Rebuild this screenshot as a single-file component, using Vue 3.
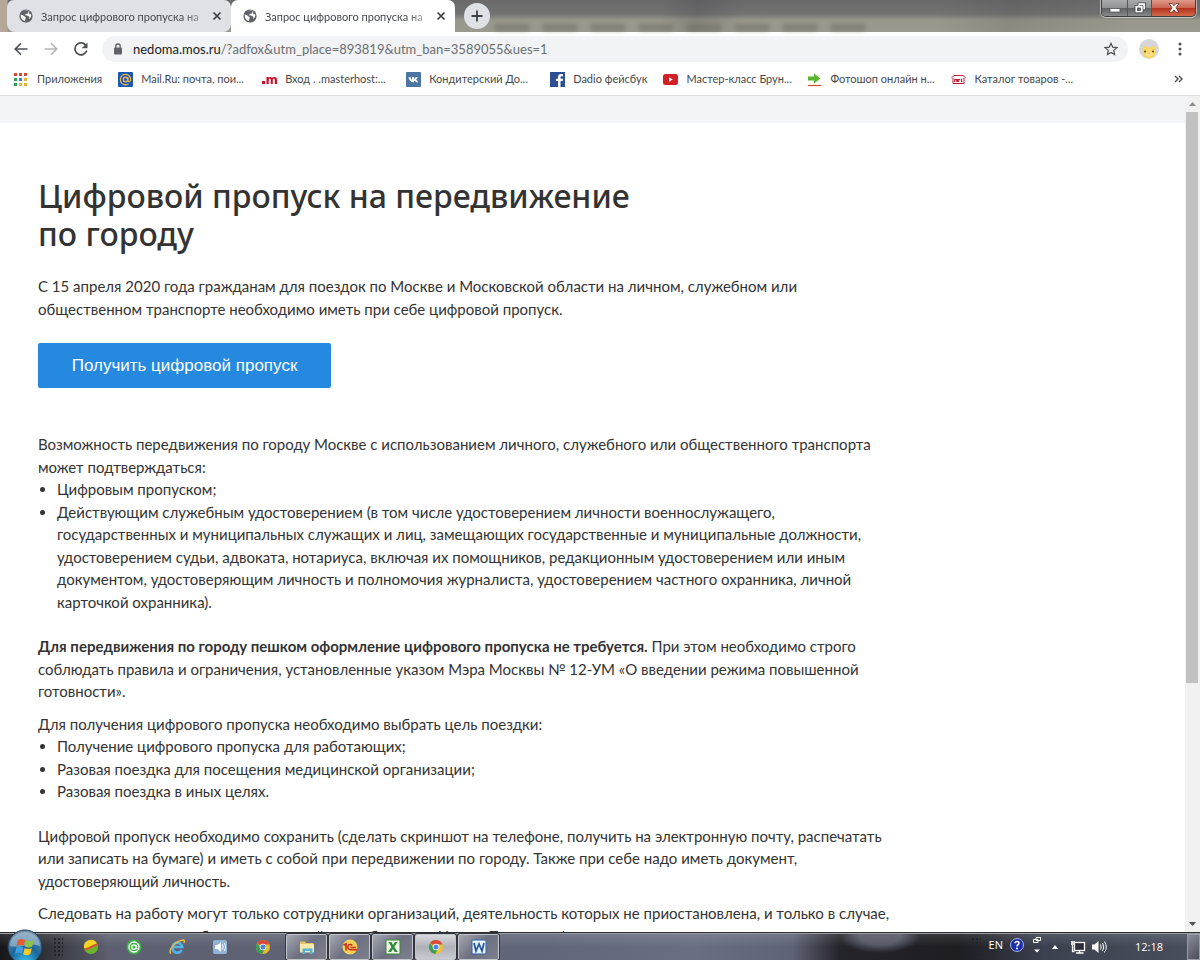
<script setup>
import { ref } from 'vue'

const tabs = [
  { id: 1, name: 'Запрос цифрового пропуска на' },
  { id: 2, name: 'Запрос цифрового пропуска на' },
]
const activeTab = ref(2)
const path = ref('/?adfox&utm_place=893819&utm_ban=3589055&ues=1')

const bookmarks = [
  { id: 'apps', name: 'Приложения' },
  { id: 'mail', name: 'Mail.Ru: почта, пои...', long: true },
  { id: 'host', name: 'Вход . .masterhost:...', long: true },
  { id: 'vk', name: 'Кондитерский До...', long: true },
  { id: 'fb', name: 'Dadio фейсбук' },
  { id: 'yt', name: 'Мастер-класс Брун...', long: true },
  { id: 'photo', name: 'Фотошоп онлайн н...', long: true },
  { id: 'cat', name: 'Каталог товаров -...', long: true },
]

const appDots = [
  '#d34836', '#d34836', '#d34836',
  '#2f9e57', '#3c7de0', '#e8b32a',
  '#2f9e57', '#e8b32a', '#e8b32a',
]

const quick = ['agent1', 'agent2', 'ie', 'sound', 'chrome']
const running = ['folder', 'onec', 'excel', 'chrome', 'word']
</script>

<template>
  <div class="desktop">
    <header class="browser">
      <div class="tab-strip">
        <div class="wallpaper-text" aria-hidden="true"><i></i><i></i><i></i><i></i><i></i><i></i><i></i><i></i></div>
        <div class="tabs">
          <div v-for="t in tabs" :key="t.id" :class="['tab', { active: activeTab === t.id }]" @click="activeTab = t.id">
            <svg class="globe" viewBox="0 0 14 14">
              <circle cx="7" cy="7" r="6.6" fill="#5f6368" />
              <path d="M1.600 5.600L4 6.200l1.800 1.600 1.200.6-.8 1.700-.2 1.900C3.300 11.500 1.500 9.300 1.600 5.600z" fill="#fff" />
              <path d="M5.500 2.200l2.800-.4 1.500.9-1 1.800-2 .5-.9 1.300 3.200.4 1.400 1.600-.4 2C12 8.800 12.500 7 12.200 5.300L10.600 5.200l-.7-1.300.6-1.200C9 1.600 7 1.500 5.500 2.200z" fill="#fff" />
            </svg>
            <span class="tab-name">{{ t.name }}</span>
            <button class="tab-close" aria-label="Закрыть вкладку">
              <svg viewBox="0 0 10 10"><path d="M1.500 1.500l7 7M8.500 1.500l-7 7" stroke="#3c4043" stroke-width="1.700" /></svg>
            </button>
          </div>
          <button class="new-tab" aria-label="Новая вкладка">
            <svg viewBox="0 0 12 12"><path d="M6 .5v11M.5 6h11" stroke="#3c4043" stroke-width="1.800" /></svg>
          </button>
        </div>
        <div class="window-controls">
          <button class="win-btn" aria-label="Свернуть">
            <svg viewBox="0 0 14 12"><rect x="2" y="6.500" width="10" height="3.500" fill="#fff" stroke="#555" stroke-width=".8" /></svg>
          </button>
          <button class="win-btn restore" aria-label="Восстановить">
            <svg viewBox="0 0 14 12"><path d="M5 .8h7.500v7H10V10.800H2V3.500h3z" fill="#fff" stroke="#444" stroke-width=".8" /><path d="M6.500 3.500H10v4" fill="none" stroke="#555" stroke-width=".8" /><rect x="4.500" y="6" width="3" height="2.500" fill="#777" stroke="#444" stroke-width=".8" /></svg>
          </button>
          <button class="win-btn close" aria-label="Закрыть">
            <svg viewBox="0 0 14 12"><path d="M2 1.500h3.200L7 3.800l1.800-2.300H12L8.900 5.800l3.100 4.400H8.800L7 7.900l-1.800 2.300H2l3.100-4.400z" fill="#fff" stroke="#6b2a20" stroke-width=".8" /></svg>
          </button>
        </div>
      </div>

      <div class="toolbar">
        <button class="nav-btn" aria-label="Назад">
          <svg viewBox="0 0 14 14"><path d="M13.500 7H1.500M7 1.200L1.200 7 7 12.800" fill="none" stroke="#4c4f53" stroke-width="1.600" /></svg>
        </button>
        <button class="nav-btn" aria-label="Вперёд" disabled>
          <svg viewBox="0 0 14 14"><path d="M.5 7h12M7 1.200L12.800 7 7 12.800" fill="none" stroke="#b5b7ba" stroke-width="1.600" /></svg>
        </button>
        <button class="nav-btn" aria-label="Обновить">
          <svg viewBox="0 0 14 14"><path d="M12 3.500A6 6 0 1 0 12.800 8.500" fill="none" stroke="#4c4f53" stroke-width="1.700" /><path d="M13.500.5v5.700H7.800z" fill="#4c4f53" /></svg>
        </button>
        <div class="omnibox">
          <svg class="lock" viewBox="0 0 10 12"><rect x="1" y="4.500" width="8" height="7" rx="1" fill="#5f6368" /><path d="M2.800 5V3.200a2.200 2.200 0 0 1 4.400 0V5" fill="none" stroke="#5f6368" stroke-width="1.300" /></svg>
          <a class="url" href="#"><b>nedoma.mos.ru</b>{{ path }}</a>
          <button class="star" aria-label="Добавить в закладки">
            <svg viewBox="0 0 14 14"><path d="M7 1.300l1.700 3.900 4.200.4-3.200 2.800.9 4.200L7 10.400l-3.600 2.200.9-4.200L1.100 5.600l4.200-.4z" fill="none" stroke="#4c4f53" stroke-width="1.200" /></svg>
          </button>
        </div>
        <button class="avatar" aria-label="Профиль">
          <svg viewBox="0 0 20 20">
            <circle cx="10" cy="10" r="10" fill="#d5d6d9" />
            <path d="M3.500 11C3.500 8.500 4.500 7 5 6l2.500 2.200h5L15 6c.5 1 1.500 2.500 1.500 5 .8 4.500-2.500 8.500-6.500 8.500S2.700 15.500 3.500 11z" fill="#f8d765" />
            <ellipse cx="10" cy="15" rx="3.500" ry="2.300" fill="#fbe48c" />
            <circle cx="6" cy="12.500" r="1" fill="#5b4420" /><circle cx="14" cy="12.500" r="1" fill="#5b4420" />
            <path d="M9 13.700h2l-1 1.200z" fill="#e2803a" />
          </svg>
        </button>
        <button class="menu" aria-label="Меню">
          <svg viewBox="0 0 4 14"><circle cx="2" cy="2" r="1.500" fill="#4c4f53" /><circle cx="2" cy="7" r="1.500" fill="#4c4f53" /><circle cx="2" cy="12" r="1.500" fill="#4c4f53" /></svg>
        </button>
      </div>

      <nav class="bookmarks">
        <a v-for="b in bookmarks" :key="b.id" href="#" :class="['bookmark', { long: b.long }]">
          <svg viewBox="0 0 15 15">
            <g v-if="b.id === 'apps'">
              <rect v-for="(c, i) in appDots" :key="i" :x="(i % 3) * 5" :y="1 + Math.floor(i / 3) * 5" width="3" height="3" :fill="c" />
            </g>
            <g v-else-if="b.id === 'mail'">
              <rect width="15" height="15" rx="1" fill="#1757b5" />
              <circle cx="7.500" cy="7.500" r="2.200" fill="none" stroke="#f0b545" stroke-width="1.400" />
              <path d="M9.800 5v3.200c0 2 2.900 1.700 2.900-.7a5.200 5.200 0 1 0-2.200 4.300" fill="none" stroke="#f0b545" stroke-width="1.300" />
            </g>
            <g v-else-if="b.id === 'host'" fill="#c8102e">
              <rect x="0" y="9" width="3" height="3" />
              <path d="M4.500 12V5h2v.8C7.500 4.700 9.300 4.700 10 6c1.200-1.600 5-1.600 5 1.500V12h-2.200V8c0-1.600-2-1.500-2 0v4H8.700V8c0-1.600-2-1.500-2 0v4z" />
            </g>
            <g v-else-if="b.id === 'vk'">
              <rect width="15" height="15" rx="1" fill="#4d75a3" />
              <path d="M2.500 5h1.800c.5 1.600 1.200 2.700 1.700 2.700V5h2v2c.8-.2 1.300-1.200 1.800-2h2c-.4 1.200-1.100 2-1.700 2.600.8.700 1.500 1.500 2 2.600H10c-.5-.8-1.200-1.500-2-1.600v1.600C5 10.600 3.200 8.500 2.500 5z" fill="#fff" />
            </g>
            <g v-else-if="b.id === 'fb'">
              <rect width="15" height="15" fill="#2f4f94" />
              <path d="M8 15V9H6V6.800h2V5.200C8 3 9.200 2 11 2h2v2.300h-1.300c-.9 0-1.200.4-1.200 1.200v1.300H13L12.700 9h-2.200v6z" fill="#fff" />
            </g>
            <g v-else-if="b.id === 'yt'">
              <rect y="2" width="15" height="11" rx="2.500" fill="#d32027" />
              <path d="M6 5.300v4.400l3.800-2.200z" fill="#fff" />
            </g>
            <g v-else-if="b.id === 'photo'">
              <path d="M1 4.500h6V1.500l6.500 5L7 11.500v-3H1z" fill="#5cb531" />
              <path d="M1 13.500h13" stroke="#d2492a" stroke-width="1.200" />
            </g>
            <g v-else fill="none" stroke="#c4162c">
              <path d="M.3 6L3 3.500h9L14.700 6M2 6v5.500h11V6" />
              <path d="M3.800 10V7.500h2V10M7 10V7.500h2M7 9h1.500M10.500 10V6.500" stroke-width="1.200" />
            </g>
          </svg>
          <span>{{ b.name }}</span>
        </a>
        <button class="more" aria-label="Другие закладки">
          <svg viewBox="0 0 9 8"><path d="M1 1l3 3-3 3M5 1l3 3-3 3" fill="none" stroke="#4c4f53" stroke-width="1.400" /></svg>
        </button>
      </nav>
    </header>

    <div class="viewport">
      <main class="page">
        <div class="site-bar"></div>
        <article class="content">
          <h1>Цифровой пропуск на передвижение<br>по городу</h1>
          <p class="lead">
            С 15 апреля 2020 года гражданам для поездок по Москве и Московской области на личном, служебном или<br>
            общественном транспорте необходимо иметь при себе цифровой пропуск.
          </p>
          <button class="get-pass">Получить цифровой пропуск</button>

          <p>
            Возможность передвижения по городу Москве с использованием личного, служебного или общественного транспорта<br>
            может подтверждаться:
          </p>
          <ul>
            <li>Цифровым пропуском;</li>
            <li>
              Действующим служебным удостоверением (в том числе удостоверением личности военнослужащего,<br>
              государственных и муниципальных служащих и лиц, замещающих государственные и муниципальные должности,<br>
              удостоверением судьи, адвоката, нотариуса, включая их помощников, редакционным удостоверением или иным<br>
              документом, удостоверяющим личность и полномочия журналиста, удостоверением частного охранника, личной<br>
              карточкой охранника).
            </li>
          </ul>
          <p class="close-next">
            <strong>Для передвижения по городу пешком оформление цифрового пропуска не требуется.</strong> При этом необходимо строго<br>
            соблюдать правила и ограничения, установленные указом Мэра Москвы № 12-УМ «О введении режима повышенной<br>
            готовности».
          </p>
          <p>Для получения цифрового пропуска необходимо выбрать цель поездки:</p>
          <ul>
            <li>Получение цифрового пропуска для работающих;</li>
            <li>Разовая поездка для посещения медицинской организации;</li>
            <li>Разовая поездка в иных целях.</li>
          </ul>
          <p class="close-next">
            Цифровой пропуск необходимо сохранить (сделать скриншот на телефоне, получить на электронную почту, распечатать<br>
            или записать на бумаге) и иметь с собой при передвижении по городу. Также при себе надо иметь документ,<br>
            удостоверяющий личность.
          </p>
          <p>
            Следовать на работу могут только сотрудники организаций, деятельность которых не приостановлена, и только в случае,<br>
            если присутствие на рабочем месте крайне необходимо. Номер Пропуска фиксируется
          </p>
        </article>
      </main>
      <div class="scrollbar">
        <svg viewBox="0 0 15 16"><path d="M4 10l3.500-4 3.500 4z" fill="#8c8c8c" /></svg>
        <div class="track"><div class="thumb"></div></div>
        <svg viewBox="0 0 15 16"><path d="M4 6l3.500 4L11 6z" fill="#505050" /></svg>
      </div>
    </div>

    <footer class="taskbar">
      <button class="start" aria-label="Пуск">
        <svg viewBox="0 0 36 36">
          <defs>
            <radialGradient id="orb" cx=".5" cy=".95" r=".9">
              <stop offset="0" stop-color="#35c3f0" /><stop offset=".5" stop-color="#1b6597" /><stop offset="1" stop-color="#6d8ca6" />
            </radialGradient>
          </defs>
          <circle cx="18" cy="18" r="17" fill="url(#orb)" stroke="#223c52" />
          <path d="M3 17a15 14 0 0 1 30 0c-8-4-20 3-30 0z" fill="#c6d8e6" opacity=".5" />
          <path d="M11 11c2.500-1.500 4.500-1.200 7 0l-1.300 6c-2.500-1.400-4.500-1.500-7 0z" fill="#e8592b" />
          <path d="M19.200 11.500c2.600 1.200 4.700 1.100 7.300-.3l-1.400 6.200c-2.500 1.500-4.700 1.500-7.200.2z" fill="#8cc63e" />
          <path d="M9.400 18.500c2.500-1.500 4.500-1.300 7 0l-1.400 6.300c-2.500-1.500-4.500-1.300-7 0z" fill="#3f9de0" />
          <path d="M17.600 19.200c2.500 1.200 4.600 1.100 7.200-.3l-1.400 6.200c-2.500 1.500-4.600 1.400-7.200.2z" fill="#fbc926" />
        </svg>
      </button>
      <div class="grip"></div>
      <div class="quick">
        <button v-for="q in quick" :key="q" :aria-label="q">
          <svg viewBox="0 0 16 16">
            <g v-if="q === 'agent1'">
              <circle cx="8" cy="8" r="7" fill="#6fb52c" />
              <path d="M1 9A7 7 0 0 1 14 4.500C10 5 6 10 1 9z" fill="#f5d327" />
              <path d="M1.500 10.500C6 10.500 10 6 14.300 5.500" fill="none" stroke="#e0542a" stroke-width="1.900" />
            </g>
            <g v-else-if="q === 'agent2'">
              <circle cx="8" cy="8" r="7.500" fill="#3fae49" />
              <circle cx="8" cy="8" r="5" fill="none" stroke="#fff" stroke-width="1.300" />
              <circle cx="8" cy="8" r="2.200" fill="none" stroke="#fff" stroke-width="1.300" />
              <path d="M10.200 6v3.500l2.300.5" fill="none" stroke="#fff" />
            </g>
            <g v-else-if="q === 'ie'" fill="none">
              <path d="M12.800 11A5 5 0 1 1 13.300 8H4.500" stroke="#4fb4ea" stroke-width="2.600" />
              <path d="M2 14.500C-1 12 5 2 14.500 1c1 0 1.200 1.500.3 3" stroke="#f0bb35" stroke-width="1.400" />
            </g>
            <g v-else-if="q === 'sound'">
              <rect x="1" y="1" width="14" height="14" rx="2" fill="#8fb4d8" />
              <path d="M3 6h2.500L9 3v10L5.500 10H3z" fill="#fff" />
              <path d="M10.500 5.500q1.500 2.500 0 5M12.500 4q2.500 4 0 8" fill="none" stroke="#fff" />
            </g>
            <g v-else>
              <circle cx="8" cy="8" r="7" fill="#e9b92d" />
              <path d="M8 8L2 4.300A7 7 0 0 1 14.500 5.500H8z" fill="#d94a38" />
              <path d="M2 4.300A7 7 0 0 0 7.200 15L10 9.500 6 9z" fill="#3a9e54" />
              <circle cx="8" cy="8" r="3.300" fill="#fff" /><circle cx="8" cy="8" r="2.500" fill="#4a86e0" />
            </g>
          </svg>
        </button>
      </div>
      <div class="running">
        <button v-for="(r, i) in running" :key="r" :class="{ current: i === 3 }" :aria-label="r">
          <svg viewBox="0 0 16 16">
            <g v-if="r === 'folder'">
              <path d="M1 2.500h5l1 1.500h7.500V13H1z" fill="#e0c468" />
              <rect x="1" y="5" width="14" height="8.500" fill="#f6e9a9" />
              <path d="M3.500 15V9.500h10V15H11v-3H6v3z" fill="#59b4dc" />
            </g>
            <g v-else-if="r === 'onec'">
              <circle cx="8" cy="8" r="7.500" fill="#f8d05a" />
              <path d="M1.500 6.300L4 4.800V11.500M10.300 6.500A2.500 2.600 0 1 0 8.500 10.700H15M8.500 8.500H14" fill="none" stroke="#cf2a1c" stroke-width="1.600" />
            </g>
            <g v-else-if="r === 'excel'">
              <rect x="1" y="1" width="14" height="14" rx="1" fill="#eef6ea" stroke="#3d8b37" />
              <path d="M3.500 3h3L8 6l2-3h2.500L9.300 8l3.500 5H9.700L8 10l-2 3H3l3.500-5z" fill="#2f8a33" />
            </g>
            <g v-else-if="r === 'chrome'">
              <circle cx="8" cy="8" r="7" fill="#f0c02e" />
              <path d="M8 8L2 4.300A7 7 0 0 1 14.500 5.500H8z" fill="#d94a38" />
              <path d="M2 4.300A7 7 0 0 0 7.200 15L10 9.500 6 9z" fill="#3a9e54" />
              <circle cx="8" cy="8" r="3.300" fill="#fff" /><circle cx="8" cy="8" r="2.500" fill="#4a86e0" />
            </g>
            <g v-else>
              <rect x="1" y="1" width="14" height="14" rx="1" fill="#eaf2fb" stroke="#2f62ad" />
              <path d="M3 4l2 8L8 5l3 7 2-8" fill="none" stroke="#2359a8" stroke-width="1.800" />
            </g>
          </svg>
        </button>
      </div>
      <div class="tray">
        <div class="grip"></div>
        <span class="lang">EN</span>
        <svg class="help" viewBox="0 0 14 14">
          <circle cx="7" cy="7" r="6.500" fill="#1a2fa8" stroke="#a9b2e6" />
          <path d="M5 5.300c0-2.600 4.200-2.400 4 0C9 6.700 7 6.700 7 8.400" fill="none" stroke="#fff" stroke-width="1.500" /><circle cx="7" cy="10.500" r="1" fill="#fff" />
        </svg>
        <svg class="lang-opts" viewBox="0 0 8 18">
          <path d="M3 1.500h4.500v3H3zM.5 3.500H5v3H.5z" fill="#444" stroke="#fff" /><path d="M1 13.500h6l-3 3z" fill="#fff" />
        </svg>
        <svg class="up" viewBox="0 0 8 6"><path d="M1 5l3-4 3 4z" fill="#fff" /></svg>
        <svg class="net" viewBox="0 0 16 16">
          <rect x="4.500" y="3.500" width="10" height="8" fill="#2b2e38" stroke="#fff" stroke-width="1.300" />
          <path d="M6 14h7.500M9.500 12v2M2.500 6v6.500h2" stroke="#fff" stroke-width="1.300" fill="none" /><rect x="1" y="2" width="4" height="4" fill="#ddd" />
        </svg>
        <svg class="vol" viewBox="0 0 16 16">
          <path d="M1 5.500h2.500L7.500 2v12L3.500 10.500H1z" fill="#fff" />
          <path d="M9.500 5.500q1.500 2.500 0 5M11.500 4q2.500 4 0 8M13.500 2.500q3.500 5.500 0 11" fill="none" stroke="#fff" />
        </svg>
        <time>12:18</time>
        <button class="show-desktop" aria-label="Свернуть все окна"></button>
      </div>
    </footer>
  </div>
</template>

<style>
body {
  background: #fff;
}
</style>

<style scoped>
.desktop {
  height: 100vh;
  display: flex;
  flex-direction: column;
  overflow: hidden;
  font-family: Lato, "Noto Sans", sans-serif;
}
button {
  border: none;
  padding: 0;
  background: none;
  font-family: inherit;
  cursor: pointer;
}
svg {
  display: block;
  flex: none;
}
a {
  color: inherit;
  text-decoration: none;
}

/* tabs */
.tab-strip {
  position: relative;
  height: 32px;
  padding: 0 4px 0 7px;
  display: flex;
  justify-content: space-between;
  align-items: flex-start;
  background:
    linear-gradient(to right, #b5a89a 0, #b5a89a 7px, transparent 8px),
    linear-gradient(100deg, transparent 55%, rgba(50, 50, 55, 0.18) 58%, transparent 62%, transparent 78%, rgba(60, 60, 60, 0.15) 84%, transparent 94%),
    linear-gradient(#69696a 0, #737373 14px, #98978c 20px, #9b998d 32px);
}
.wallpaper-text {
  position: absolute;
  left: 495px;
  top: 24px;
  display: flex;
  gap: 14px;
}
.wallpaper-text i {
  width: 34px;
  height: 7px;
  background: #6a675a;
  opacity: 0.45;
  filter: blur(2px);
}
.tabs {
  position: relative;
  display: flex;
  align-items: center;
}
.tab {
  width: 224px;
  height: 32px;
  box-sizing: border-box;
  padding: 0 9px 0 12px;
  display: flex;
  align-items: center;
  background: #dee1e6;
  border-radius: 7px 7px 8px 8px;
  font-size: 11px;
  color: #45494d;
}
.tab.active {
  background: #fff;
  border-radius: 7px 7px 0 0;
}
.globe {
  width: 14px;
  height: 14px;
  margin-right: 8px;
}
.tab-name {
  flex: 1;
  white-space: nowrap;
  mask-image: linear-gradient(to right, #000 86%, transparent 105%);
}
.tab-close {
  width: 10px;
  margin-left: 6px;
}
.new-tab {
  width: 26px;
  height: 26px;
  margin-left: 9px;
  border-radius: 50%;
  background: #dee1e6;
  display: flex;
  align-items: center;
  justify-content: center;
}
.new-tab svg {
  width: 12px;
}
.window-controls {
  position: relative;
  display: flex;
  height: 16px;
  border: 1px solid #3f3f40;
  border-top: none;
  border-radius: 0 0 5px 5px;
  overflow: hidden;
  box-shadow: 0 0 0 1px rgba(255, 255, 255, 0.5);
}
.win-btn {
  width: 25px;
  display: flex;
  align-items: center;
  justify-content: center;
  background: linear-gradient(#a9aaab 0, #909192 50%, #5f6061 51%, #88898a 100%);
}
.win-btn svg {
  width: 14px;
}
.win-btn.restore {
  border-left: 1px solid #555;
  border-right: 1px solid #555;
}
.win-btn.close {
  width: 43px;
  background: linear-gradient(#dd9a8b 0, #cc6450 50%, #b5311b 51%, #d2694a 100%);
}

/* toolbar */
.toolbar {
  height: 33px;
  padding: 0 18px 0 14px;
  display: flex;
  align-items: center;
  background: #fff;
}
.nav-btn {
  width: 14px;
  margin-right: 16px;
}
.nav-btn + .nav-btn + .nav-btn {
  margin-right: 14px;
}
.omnibox {
  flex: 1;
  height: 26px;
  padding: 0 10px 0 11px;
  display: flex;
  align-items: center;
  border-radius: 13px;
  background: #f1f3f4;
  font-size: 13px;
  color: #6a6e73;
}
.lock {
  width: 10px;
  margin-right: 10px;
}
.url {
  flex: 1;
}
.url b {
  font-weight: 400;
  color: #202124;
}
.star {
  width: 14px;
}
.avatar {
  width: 20px;
  margin: 0 19px 0 11px;
}
.menu {
  width: 4px;
}

/* bookmarks */
.bookmarks {
  height: 28px;
  padding: 0 17px 2px 14px;
  display: flex;
  align-items: center;
  gap: 16px;
  background: #fff;
  border-bottom: 1px solid #dcdee1;
  font-size: 11px;
  line-height: 16px;
  color: #45494d;
  white-space: nowrap;
}
.bookmark {
  display: flex;
  align-items: center;
  gap: 8px;
}
.bookmark.long {
  width: 128px;
}
.bookmark svg {
  width: 15px;
}
.more {
  width: 9px;
  margin-left: auto;
}

/* page */
.viewport {
  flex: 1;
  min-height: 0;
  display: flex;
}
.page {
  flex: 1;
  overflow: hidden;
  background: #fff;
}
.site-bar {
  height: 27px;
  background: #f3f4f7;
}
.content {
  padding: 54px 38px 0;
  font-size: 15px;
  line-height: 1.5;
  color: #333;
  white-space: nowrap;
}
h1 {
  margin: 0 0 22px;
  font-family: "Noto Sans", sans-serif;
  font-size: 32px;
  font-weight: 500;
  line-height: 38px;
}
p {
  margin: 0;
}
.lead {
  margin-bottom: 23px;
}
.get-pass {
  display: block;
  width: 293px;
  height: 45px;
  margin-bottom: 45px;
  border-radius: 2px;
  background: #2589e0;
  color: #fff;
  font-family: "Liberation Sans", Arial, sans-serif;
  font-size: 17px;
}
ul {
  margin: 0 0 22px;
  padding-left: 19px;
}
.close-next {
  margin-bottom: 10px;
}
strong {
  font-weight: 700;
}
.scrollbar {
  width: 15px;
  display: flex;
  flex-direction: column;
  background: #f1f1f1;
}
.track {
  flex: 1;
  padding: 0 2px 0 1px;
}
.thumb {
  height: 71%;
  background: #c1c1c1;
}

/* taskbar */
.taskbar {
  position: relative;
  height: 28px;
  box-sizing: border-box;
  padding-left: 7px;
  display: flex;
  align-items: center;
  border-top: 1px solid #2d2e33;
  box-shadow: inset 0 1px 0 #9b9ca3;
  background:
    linear-gradient(rgba(255, 255, 255, 0.12), transparent 50%),
    radial-gradient(ellipse 40px 16px at 880px 4px, #555866 50%, transparent 100%),
    linear-gradient(to right, #17171a 0, #35363d 50px, #5d6070 110px, #62667a 45%, #6a6e82 58%, #5f6377 66%, #24242a 70%, #1d1d22 80%, #3c4150 87%, #4a4f5e 100%);
}
.start {
  width: 36px;
  height: 36px;
  margin: -4px 10px -4px 0;
}
.grip {
  width: 10px;
  height: 20px;
  background: radial-gradient(circle, #22232a 1px, transparent 1px) 0 0 / 4px 4px;
}
.quick {
  display: flex;
  gap: 27px;
  margin-left: 20px;
}
.quick svg,
.running svg {
  width: 16px;
}
.running {
  display: flex;
  gap: 2px;
  margin-left: 15px;
}
.running button {
  width: 41px;
  height: 26px;
  display: flex;
  align-items: center;
  justify-content: center;
  box-sizing: border-box;
  border: 1px solid #c3c5cc;
  border-radius: 2px;
  background: linear-gradient(135deg, #a5a7b0, #6d7080 50%, #7d808e);
  outline: 1px solid #33343b;
}
.running button.current {
  background: linear-gradient(#d9dade, #aeb0b9 50%, #c9cbd1);
}
.tray {
  height: 100%;
  margin-left: auto;
  display: flex;
  align-items: center;
  font-family: "Open Sans", "Noto Sans", sans-serif;
  font-size: 11px;
  color: #fff;
}
.lang {
  margin: 0 7px 4px 8px;
}
.help {
  width: 14px;
  margin: 0 9px 4px 0;
}
.lang-opts {
  width: 8px;
  margin: 0 10px 4px 0;
}
.up {
  width: 8px;
  margin-right: 11px;
}
.net {
  width: 16px;
  margin-right: 5px;
}
.vol {
  width: 16px;
}
time {
  margin: 0 24px 0 28px;
}
.show-desktop {
  width: 13px;
  height: 26px;
  border: 1px solid #9a9ca5;
  background: linear-gradient(135deg, #8b8e99, #4a4d59);
}
</style>
